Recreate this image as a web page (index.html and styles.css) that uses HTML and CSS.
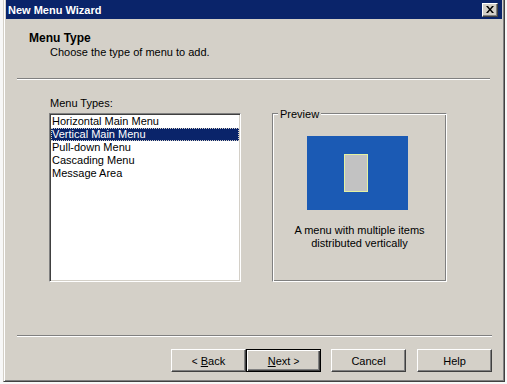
FILE: index.html
```html
<!DOCTYPE html>
<html lang="en">
<head>
    <meta charset="UTF-8">
    <title>New Menu Wizard</title>
    <link rel="stylesheet" href="styles.css">
</head>
<body>
    <div class="window">
        <!-- Title bar -->
        <div class="titlebar">
            <span class="title">New Menu Wizard</span>
            <button class="close-btn" aria-label="Close">
                <svg width="8" height="7" viewBox="0 0 8 7">
                    <path d="M0 0h2l2 2.5 2-2.5h2l-3 3.5 3 3.5h-2l-2-2.5-2 2.5h-2l3-3.5z" fill="#000"/>
                </svg>
            </button>
        </div>

        <!-- Page header -->
        <div class="header">
            <div class="header-title">Menu Type</div>
            <div class="header-sub">Choose the type of menu to add.</div>
        </div>
        <div class="etched top-sep"></div>

        <!-- Page body -->
        <div class="page">
            <div class="list-label">Menu Types:</div>
            <div class="listbox">
                <div class="list-item">Horizontal Main Menu</div>
                <div class="list-item selected">Vertical Main Menu</div>
                <div class="list-item">Pull-down Menu</div>
                <div class="list-item">Cascading Menu</div>
                <div class="list-item">Message Area</div>
            </div>

            <div class="groupbox">
                <span class="legend">Preview</span>
                <div class="preview-screen">
                    <div class="preview-menu"></div>
                </div>
                <div class="preview-caption">A menu with multiple items<br>distributed vertically</div>
            </div>
        </div>

        <div class="etched bottom-sep"></div>

        <!-- Buttons -->
        <div class="button-row">
            <button class="btn"><span class="arrow">&lt;</span> <u>B</u>ack</button>
            <button class="btn default"><u>N</u>ext <span class="arrow">&gt;</span></button>
            <button class="btn cancel">Cancel</button>
            <button class="btn help">Help</button>
        </div>
    </div>
</body>
</html>
```

FILE: styles.css
```css
/* General */
body {
    margin: 0;
    background-color: #f7f7f7;
    font-family: "Liberation Sans", Arial, sans-serif;
    font-size: 11px;
    color: #000;
}

/* Window frame */
.window {
    margin-left: 3px;
    width: 502px;
    height: 382px;
    box-sizing: border-box;
    display: flex;
    flex-direction: column;
    padding: 0 2px 2px 2px;
    background-color: #d4d0c8;
    border: 1px solid;
    border-top: none;
    border-color: #d4d0c8 #404040 #404040 #d4d0c8;
    box-shadow: inset 1px 0 #fff, inset -1px -1px #808080;
}

.titlebar {
    height: 19px;
    flex-shrink: 0;
    display: flex;
    align-items: center;
    justify-content: space-between;
    padding: 0 4px 0 2px;
    background-color: #0a246a;
    color: #fff;
    font-weight: bold;
    font-size: 11px;
}

.close-btn {
    width: 16px;
    height: 14px;
    padding: 0;
    display: flex;
    align-items: center;
    justify-content: center;
    background-color: #d4d0c8;
    border: 1px solid;
    border-color: #fff #404040 #404040 #fff;
    box-shadow: inset -1px -1px #808080;
}

/* Header */
.header {
    height: 59px;
    box-sizing: border-box;
    padding: 12px 0 0 23px;
    flex-shrink: 0;
}

.header-title {
    font-weight: bold;
    font-size: 12px;
    line-height: 15px;
}

.header-sub {
    padding-left: 21px;
    line-height: 13px;
}

.etched {
    height: 2px;
    box-sizing: border-box;
    border-top: 1px solid #808080;
    border-bottom: 1px solid #fff;
}

.top-sep {
    margin-left: 11px;
    width: 473px;
}

.bottom-sep {
    margin-left: 11px;
    width: 475px;
}

/* Body */
.page {
    height: 255px;
    box-sizing: border-box;
    padding: 17px 0 0 43px;
    display: grid;
    grid-template-columns: 192px 175px;
    grid-template-rows: 16px 169px;
    column-gap: 31px;
}

.list-label {
    line-height: 13px;
    padding-left: 1px;
}

.listbox {
    grid-row: 2;
    background-color: #fff;
    border: 1px solid;
    border-color: #808080 #fff #fff #808080;
    box-shadow: inset 1px 1px #404040, inset -1px -1px #d4d0c8;
    padding: 0 1px;
    box-sizing: border-box;
}

.list-item {
    height: 13px;
    line-height: 13px;
    padding-left: 1px;
    white-space: nowrap;
}

.list-item:first-child {
    margin-top: 1px;
}

.list-item.selected {
    background-color: #0a246a;
    color: #fff;
    outline: 1px dotted #d4d0c8;
    outline-offset: -1px;
}

/* Preview group */
.groupbox {
    grid-row: 2;
    grid-column: 2;
    position: relative;
    border: 1px solid;
    border-color: #808080 #fff #fff #808080;
    box-shadow: inset 1px 1px #fff, inset -1px -1px #808080;
    display: flex;
    flex-direction: column;
    align-items: center;
    padding-top: 22px;
    box-sizing: border-box;
}

.legend {
    position: absolute;
    top: -6px;
    left: 5px;
    padding: 0 2px;
    background-color: #d4d0c8;
    line-height: 12px;
}

.preview-screen {
    width: 101px;
    height: 74px;
    margin-right: 5px;
    background-color: #1b5ab4;
    display: flex;
    align-items: center;
    justify-content: center;
}

.preview-menu {
    width: 24px;
    height: 38px;
    box-sizing: border-box;
    background-color: #c2c2c2;
    border: 1px solid #e4f2a2;
    margin-left: -2px;
}

.preview-caption {
    margin-top: 14px;
    text-align: center;
    line-height: 13px;
}

/* Buttons */
.button-row {
    display: flex;
    justify-content: flex-end;
    padding: 12px 10px 0 0;
}

.btn {
    width: 75px;
    height: 23px;
    padding: 0;
    font-family: inherit;
    font-size: 11px;
    color: #000;
    background-color: #d4d0c8;
    border: 1px solid;
    border-color: #fff #404040 #404040 #fff;
    box-shadow: inset -1px -1px #808080;
}

.btn.default {
    border: 1px solid #000;
    box-shadow: inset 1px 1px #fff, inset -1px -1px #404040, inset -2px -2px #808080;
}

.btn.cancel {
    margin-left: 10px;
}

.btn.help {
    margin-left: 11px;
}

.arrow {
    font-size: 10px;
}
```
